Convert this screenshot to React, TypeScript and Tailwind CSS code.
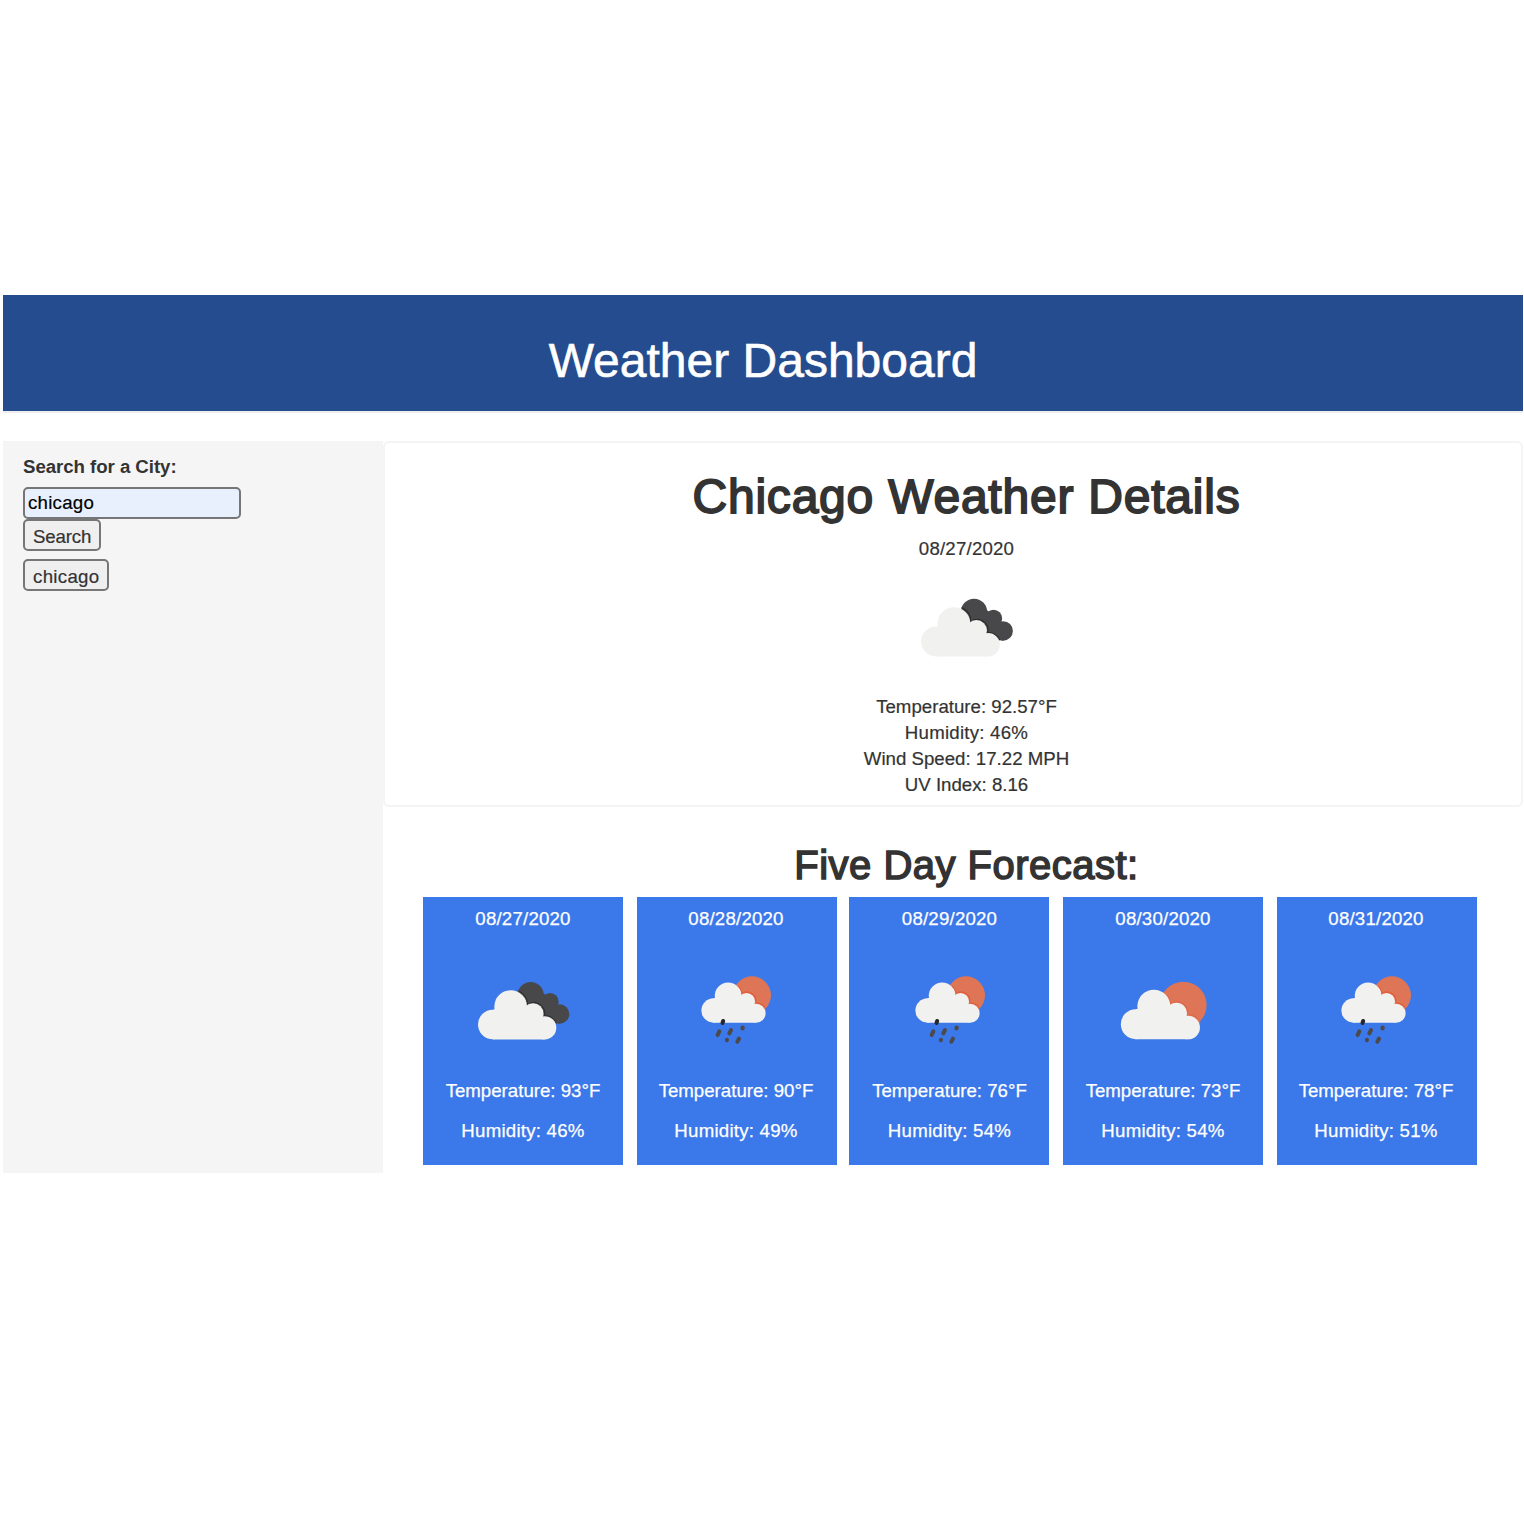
import React from "react";

type IconKind = "cloudy" | "partly" | "rain";

function WhiteCloud({ transform }: { transform?: string }) {
  return (
    <g fill="#f1f1f0" transform={transform}>
      <circle cx="98.5" cy="193.5" r="44.5" />
      <circle cx="152" cy="140" r="49" />
      <circle cx="219" cy="161" r="31.5" />
      <circle cx="254" cy="203.5" r="35" />
      <path d="M98 238 L98 150 L152 130 L219 150 L254 190 L254 238.5 L98 238.5Z" />
    </g>
  );
}

function WeatherIcon({ kind, viewBox }: { kind: IconKind; viewBox: string }) {
  return (
    <svg className="block h-[100px] w-[130px]" viewBox={viewBox} aria-hidden="true">
      {kind === "cloudy" && (
        <>
          <g fill="#48484a">
            <circle cx="212" cy="105" r="39" />
            <circle cx="270" cy="125" r="26" />
            <circle cx="299" cy="162" r="29" />
            <path d="M180 90 L240 90 L262 110 L290 140 L299 191 L250 180 L200 140Z" />
          </g>
          <path d="M175 92 A49 49 0 0 1 203 134 A32 32 0 0 1 253 167 A36 36 0 0 1 289 190" fill="none" stroke="#2b2b2c" strokeWidth="3" />
          <WhiteCloud />
        </>
      )}
      {kind === "partly" && (
        <>
          <circle cx="250" cy="135" r="70" fill="#dd7556" />
          <path d="M194 101 A49 49 0 0 1 212 132 A32 32 0 0 1 262 165 A36 36 0 0 1 300 190" fill="none" stroke="#e0694a" strokeWidth="4" />
          <WhiteCloud transform="translate(8 -2.8) scale(1.01)" />
        </>
      )}
      {kind === "rain" && (
        <>
          <circle cx="216" cy="106" r="57" fill="#dd7556" />
          <path d="M173 78 A40 40 0 0 1 185 102 A26 26 0 0 1 226 129 A30 30 0 0 1 256 148" fill="none" stroke="#e25f3b" strokeWidth="5" />
          <WhiteCloud transform="translate(19.8 -7.2) scale(.82)" />
          <g stroke="#4a4a4c" strokeLinecap="round" strokeWidth="12">
            <path d="M118 214 L113 225" />
            <path d="M153 210 L148 220" />
            <path d="M188 203 L187.500 205" strokeWidth="13" />
            <path d="M141 239 L140.500 241" />
            <path d="M177 236 L172 245" />
            <path d="M129.500 183 L127.500 189" stroke="#28282a" />
          </g>
        </>
      )}
    </svg>
  );
}

type Day = { date: string; kind: IconKind; viewBox: string; temp: string; humidity: string; nudge: string };

const days: Day[] = [
  { date: "08/27/2020", kind: "cloudy", viewBox: "-6 0 390 300", temp: "93", humidity: "46", nudge: "" },
  { date: "08/28/2020", kind: "rain", viewBox: "-24 0 390 300", temp: "90", humidity: "49", nudge: "pr-[2px]" },
  { date: "08/29/2020", kind: "rain", viewBox: "-30 0 390 300", temp: "76", humidity: "54", nudge: "pl-[1px]" },
  { date: "08/30/2020", kind: "partly", viewBox: "-6 0 390 300", temp: "73", humidity: "54", nudge: "" },
  { date: "08/31/2020", kind: "rain", viewBox: "-24 0 390 300", temp: "78", humidity: "51", nudge: "pr-[2px]" },
];

function DayCard({ day }: { day: Day }) {
  return (
    <article className="flex h-[268px] w-[200px] flex-col items-center bg-[#3b78e9] pt-[9px] text-white [-webkit-text-stroke:0.25px_#ffffff]">
      <p className={`leading-[26px] tracking-[0.2px] ${day.nudge}`}>{day.date}</p>
      <div className="mt-7">
        <WeatherIcon kind={day.kind} viewBox={day.viewBox} />
      </div>
      <p className={`mt-[18px] whitespace-nowrap leading-[26px] ${day.nudge}`}>Temperature: {day.temp}°F</p>
      <p className={`mt-[14px] leading-[26px] tracking-[0.23px] ${day.nudge}`}>Humidity: {day.humidity}%</p>
    </article>
  );
}

export default function App() {
  return (
    <div className="h-[1524px] w-[1524px] overflow-hidden bg-white pt-[295px] pl-[3px] font-['Liberation_Sans',Arial,sans-serif] text-[18.67px] text-[#333333]">
      <div className="w-[1520px]">
        <header className="flex h-[118px] justify-center border-b-2 border-[#eeeeee] bg-[#254c8e] pt-[39px]">
          <h1 className="text-5xl leading-[54px] text-white [-webkit-text-stroke:0.6px_#ffffff]">Weather Dashboard</h1>
        </header>

        <main className="mt-7 flex h-[732px]">
          <aside className="flex w-[380px] flex-col items-start bg-[#f5f5f5] pt-[13px] pl-5">
            <label htmlFor="city" className="font-bold leading-[26px] tracking-[-0.05px]">Search for a City:</label>
            <input
              id="city"
              defaultValue="chicago"
              className="mt-[7px] h-8 w-[218px] rounded-[5px] border-2 border-[#767676] bg-[#e8f0fe] px-[3px] tracking-[0.25px] text-black [-webkit-text-stroke:0.2px_#000000]"
            />
            <button className="flex h-8 w-[78px] items-center rounded-[5px] border-2 border-[#767676] bg-[#efefef] px-2 pt-[3px] leading-[26px] tracking-[-0.15px] [-webkit-text-stroke:0.2px_#333333]">Search</button>
            <button className="mt-2 flex h-8 w-[86px] items-center rounded-[5px] border-2 border-[#767676] bg-[#efefef] px-2 pt-[3px] leading-[26px] tracking-[0.3px] [-webkit-text-stroke:0.2px_#333333]">chicago</button>
          </aside>

          <div className="flex w-[1140px] flex-col">
            <section className="flex h-[366px] flex-col items-center rounded-md border-2 border-[#f4f4f4] pt-[27px] pl-[27px]">
              <h2 className="text-5xl leading-[54px] tracking-[0.78px] [-webkit-text-stroke:1.8px_#333333]">Chicago Weather Details</h2>
              <p className="mt-[12px] leading-[26px] tracking-[0.2px] [-webkit-text-stroke:0.2px_#333333]">08/27/2020</p>
              <div className="mt-[18px]">
                <WeatherIcon kind="cloudy" viewBox="-3 10 388 298.460" />
              </div>
              <div className="mt-[14px] text-center leading-[26px] [-webkit-text-stroke:0.2px_#333333]">
                <p>Temperature: 92.57°F</p>
                <p className="tracking-[0.23px]">Humidity: 46%</p>
                <p>Wind Speed: 17.22 MPH</p>
                <p>UV Index: 8.16</p>
              </div>
            </section>

            <section className="mt-[35px]">
              <h2 className="pl-[27px] text-center text-[40px] leading-[46px] tracking-[0.48px] [-webkit-text-stroke:1.5px_#333333]">Five Day Forecast:</h2>
              <div className="mt-[9px] grid grid-cols-[214px_212px_214px_214px_200px] pl-10">
                {days.map((day) => (
                  <DayCard key={day.date} day={day} />
                ))}
              </div>
            </section>
          </div>
        </main>
      </div>
    </div>
  );
}
